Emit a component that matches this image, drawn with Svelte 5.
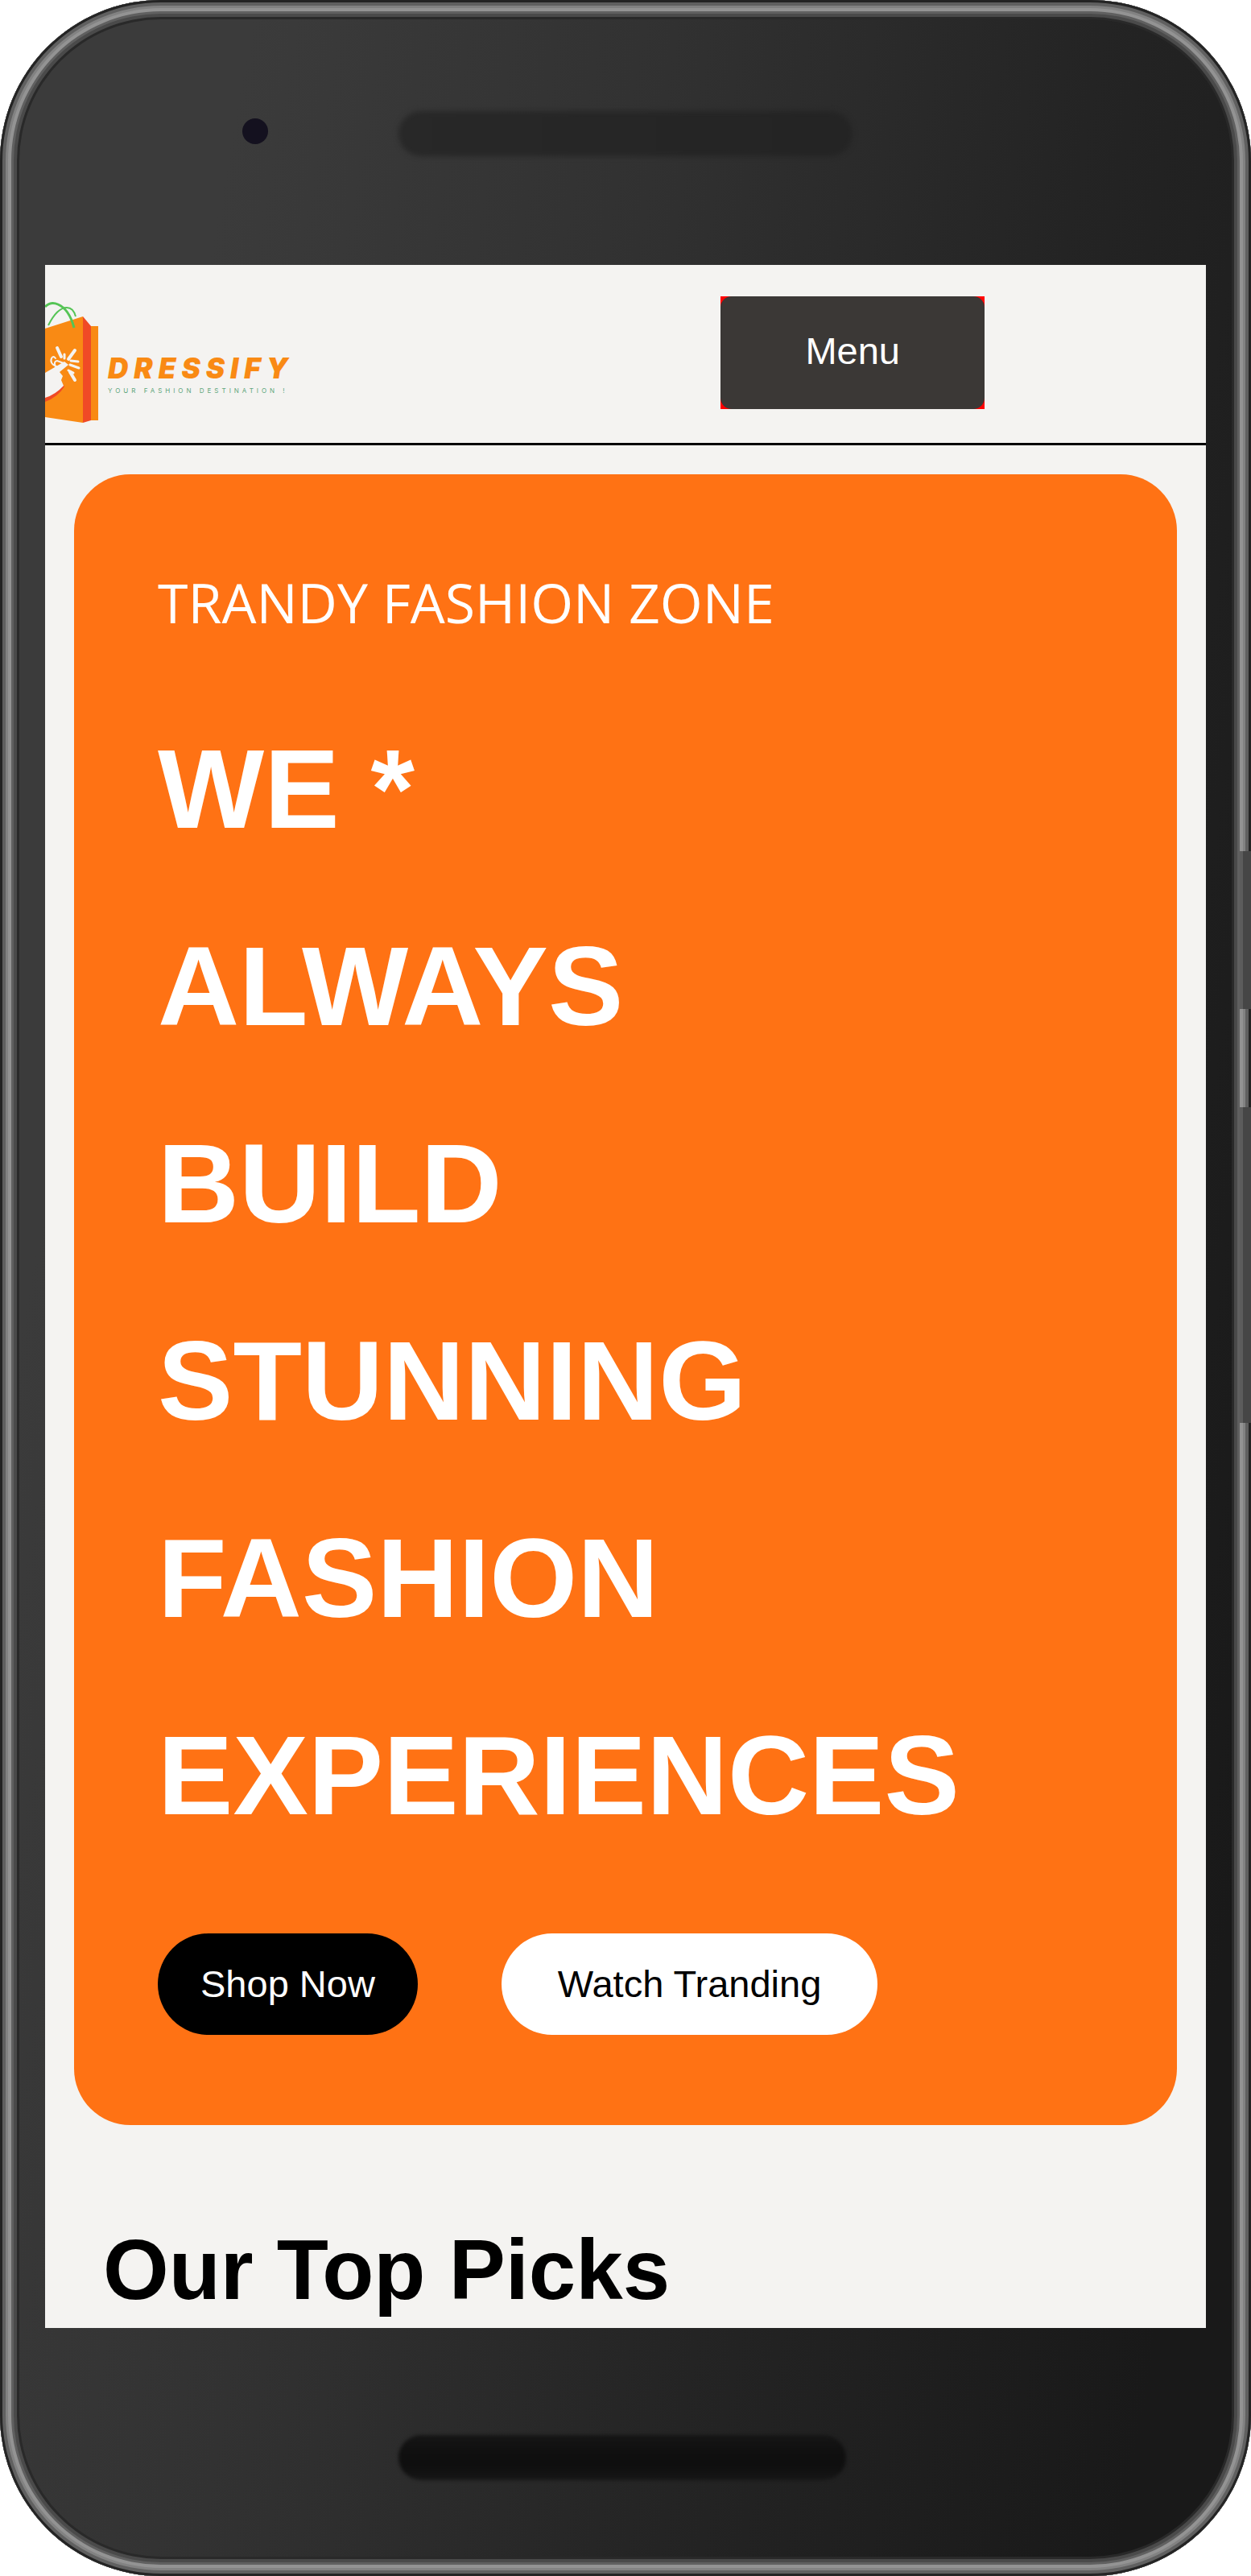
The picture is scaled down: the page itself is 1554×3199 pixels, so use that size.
<script lang="ts">
  const headline = ['WE *', 'ALWAYS', 'BUILD', 'STUNNING', 'FASHION', 'EXPERIENCES'];
</script>

<div class="phone">
  <div class="bezel top">
    <span class="camera"></span>
    <span class="speaker"></span>
  </div>

  <div class="screen">
    <header>
      <a class="logo" href="#home" aria-label="Dressify home">
        <svg class="bag" viewBox="0 0 66 154" aria-hidden="true">
          <path fill="#f98a14" d="M0 33 47 18V150L0 143z" />
          <path fill="#f98a14" d="M56 30H66V147H56z" />
          <path fill="#f04a26" d="M47 18 57 30V147L47 150z" />
          <path fill="#f04a26" d="M0 124Q16 118 24 105L20 100 0 112z" />
          <path fill="#f4f3f1" d="M0 88 24 74 29 78 18 87 22 92 20 97 23 104Q13 115 0 119z" />
          <g fill="none" stroke="#f4f3f1" stroke-linecap="round">
            <path stroke-width="4" d="M15 57 20 68M37 60 29 71M31 87 37 97" />
            <path stroke-width="3" d="M31 78 42 82M32 73 41 74M29 85 35 88M24 65V70" />
            <path stroke-width="2" d="M16 81Q5 77 8 70 10 66 13 70M13 80Q10 74 15 73L23 76" />
          </g>
          <g fill="none" stroke="#55c455">
            <path stroke-width="2" d="M4 29Q15 7 27 7 35 7 38 18" />
            <path stroke-width="3" d="M0 6Q7-1 16 3 30 9 36 32" />
          </g>
        </svg>
        <span class="words">
          <span class="name">DRESSIFY</span>
          <span class="tag">YOUR FASHION DESTINATION !</span>
        </span>
      </a>
      <div class="menu-wrap"><button class="menu" type="button">Menu</button></div>
    </header>

    <main>
      <section class="hero">
        <p>TRANDY FASHION ZONE</p>
        <h1>
          {#each headline as line}<span>{line}</span>{/each}
        </h1>
        <div class="actions">
          <button class="shop" type="button">Shop Now</button>
          <button class="watch" type="button">Watch Tranding</button>
        </div>
      </section>
      <h2>Our Top Picks</h2>
    </main>
  </div>

  <div class="bezel bottom"><span class="grille"></span></div>
  <span class="side power"></span>
  <span class="side volume"></span>
</div>

<style>
  :global(body) {
    margin: 0;
    background: #fff;
  }
  .phone {
    position: relative;
    box-sizing: border-box;
    padding: 0 56px;
    border-radius: 200px;
    overflow: hidden;
    font-family: 'Liberation Sans', Arial, sans-serif;
    background: linear-gradient(100deg, #3b3b3b 15%, #323232 38%, #242424 65%, #191919 92%);
    box-shadow:
      inset 0 0 0 3px #242424,
      inset 0 0 0 7px #606060,
      inset 0 0 0 10px #828282,
      inset 0 0 0 14px #939393,
      inset 0 0 0 17px #606060,
      inset 0 0 0 21px #4a4a4a,
      inset 0 0 0 24px #292929;
  }
  .bezel {
    display: grid;
    grid-template-columns: 1fr 564px 1fr;
    align-items: start;
  }
  .top {
    height: 329px;
  }
  .camera {
    justify-self: end;
    margin: 147px 162px 0 0;
    width: 32px;
    height: 32px;
    border-radius: 50%;
    background: #14111f;
  }
  .speaker {
    height: 56px;
    margin-top: 138px;
    border-radius: 28px;
    background: linear-gradient(90deg, #282828, #242424);
    filter: blur(3px);
  }
  .bottom {
    height: 308px;
  }
  .grille {
    grid-column: 2;
    height: 56px;
    margin: 133px 8px 0 0;
    border-radius: 28px;
    background: linear-gradient(#161616, #101010 30%, #0f0f0f 70%, #171717);
    filter: blur(2px);
  }
  .side {
    position: absolute;
    right: 0;
    width: 14px;
    background: #464646;
    border-left: 4px solid #5c5c5c;
    box-sizing: border-box;
  }
  .power {
    top: 1057px;
    height: 196px;
  }
  .volume {
    top: 1375px;
    height: 392px;
  }
  .screen {
    background: #f4f3f1;
    color: #000;
  }
  header {
    display: flex;
    justify-content: space-between;
    align-items: flex-start;
    height: 221px;
    border-bottom: 3px solid #000;
  }
  .logo {
    display: flex;
    gap: 12px;
    padding-top: 46px;
    text-decoration: none;
  }
  .bag {
    width: 66px;
    height: 154px;
  }
  .words {
    display: flex;
    flex-direction: column;
    padding-top: 62px;
    white-space: nowrap;
  }
  .name {
    font: italic 900 35px/40px Inter, sans-serif;
    letter-spacing: 7px;
    color: #f98a14;
  }
  .tag {
    font: 8px/16px Inter, sans-serif;
    letter-spacing: 4px;
    color: #5fa67c;
  }
  .menu-wrap {
    display: flex;
    margin: 39px 275px 0 0;
    background: #f00;
  }
  button {
    border: 0;
    font: 47px/54px 'Liberation Sans', Arial, sans-serif;
    cursor: pointer;
    white-space: nowrap;
  }
  .menu {
    padding: 41px 105px 45px;
    border-radius: 14px;
    background: #3b3836;
    color: #fff;
  }
  main {
    padding: 36px 36px 12px;
  }
  .hero {
    padding: 111px 104px 112px;
    border-radius: 70px;
    background: #ff7214;
    color: #fff;
  }
  p {
    margin: 0 0 61px;
    font: 68px/96px 'Open Sans', sans-serif;
  }
  h1 {
    margin: 0 0 74px;
    font-size: 140px;
    line-height: 245px;
  }
  h1 span {
    display: block;
  }
  .actions {
    display: flex;
    gap: 104px;
  }
  .actions button {
    padding: 36px 53px;
    border-radius: 63px;
  }
  .shop {
    background: #000;
    color: #fff;
  }
  .actions .watch {
    padding: 36px 70px;
    background: #fff;
    color: #000;
  }
  h2 {
    margin: 120px 36px 0;
    font-size: 105px;
    line-height: 120px;
  }
</style>
